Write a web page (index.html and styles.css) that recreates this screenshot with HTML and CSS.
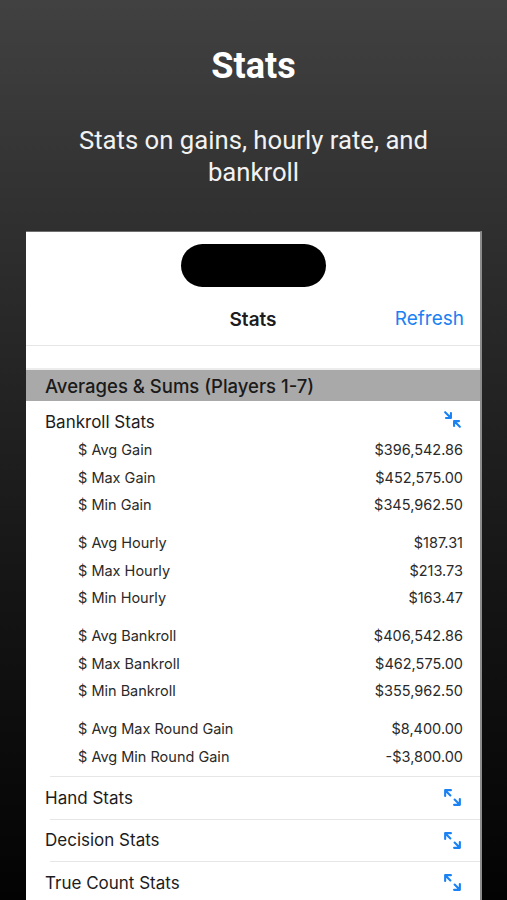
FILE: index.html
```html
<!DOCTYPE html>
<html lang="en">
<head>
    <meta charset="UTF-8">
    <meta name="viewport" content="width=device-width, initial-scale=1.0">
    <title>Stats</title>
    <link rel="stylesheet" href="styles.css">
</head>
<body>

    <!-- Promo header above the phone screen -->
    <header class="promo">
        <h1 class="promo-title">Stats</h1>
        <p class="promo-text">Stats on gains, hourly rate, and bankroll</p>
    </header>

    <div class="phone">
        <div class="island"></div>

        <div class="nav-bar">
            <span class="nav-title">Stats</span>
            <span class="nav-action">Refresh</span>
        </div>

        <div class="section-head">Averages &amp; Sums (Players 1-7)</div>

        <!-- Expanded group -->
        <div class="group">
            <div class="group-head">
                <span>Bankroll Stats</span>
                <svg class="toggle-icon" viewBox="0 0 20 20">
                    <path d="M3 3 L8.5 8.5 M8.5 3.8 V8.5 H3.8 M17 17 L11.5 11.5 M11.5 16.2 V11.5 H16.2"/>
                </svg>
            </div>

            <div class="stat-block">
                <div class="stat-row"><span>$ Avg Gain</span><span>$396,542.86</span></div>
                <div class="stat-row"><span>$ Max Gain</span><span>$452,575.00</span></div>
                <div class="stat-row"><span>$ Min Gain</span><span>$345,962.50</span></div>
            </div>
            <div class="stat-block">
                <div class="stat-row"><span>$ Avg Hourly</span><span>$187.31</span></div>
                <div class="stat-row"><span>$ Max Hourly</span><span>$213.73</span></div>
                <div class="stat-row"><span>$ Min Hourly</span><span>$163.47</span></div>
            </div>
            <div class="stat-block">
                <div class="stat-row"><span>$ Avg Bankroll</span><span>$406,542.86</span></div>
                <div class="stat-row"><span>$ Max Bankroll</span><span>$462,575.00</span></div>
                <div class="stat-row"><span>$ Min Bankroll</span><span>$355,962.50</span></div>
            </div>
            <div class="stat-block">
                <div class="stat-row"><span>$ Avg Max Round Gain</span><span>$8,400.00</span></div>
                <div class="stat-row"><span>$ Avg Min Round Gain</span><span>-$3,800.00</span></div>
            </div>
        </div>

        <!-- Collapsed groups -->
        <div class="group-row">
            <span>Hand Stats</span>
            <svg class="toggle-icon" viewBox="0 0 20 20">
                <path d="M3 3 L8 8 M3 8.5 V3 H8.5 M17 17 L12 12 M17 11.5 V17 H11.5"/>
            </svg>
        </div>
        <div class="group-row">
            <span>Decision Stats</span>
            <svg class="toggle-icon" viewBox="0 0 20 20">
                <path d="M3 3 L8 8 M3 8.5 V3 H8.5 M17 17 L12 12 M17 11.5 V17 H11.5"/>
            </svg>
        </div>
        <div class="group-row">
            <span>True Count Stats</span>
            <svg class="toggle-icon" viewBox="0 0 20 20">
                <path d="M3 3 L8 8 M3 8.5 V3 H8.5 M17 17 L12 12 M17 11.5 V17 H11.5"/>
            </svg>
        </div>
    </div>

</body>
</html>
```

FILE: styles.css
```css
html,
body {
    height: 100%;
}

body {
    margin: 0;
    overflow: hidden;
    background: linear-gradient(to bottom, #414141 0%, #2c2c2c 30%, #151515 65%, #030303 100%);
    font-family: Inter, "Noto Sans", sans-serif;
    color: #1c1c1e;
}

.promo {
    text-align: center;
    color: #ffffff;
    font-family: Roboto, "Noto Sans", sans-serif;
    padding-top: 44px;
    height: 187px;
    box-sizing: border-box;
}

.promo-title {
    margin: 0;
    font-size: 36px;
    line-height: 44px;
    font-weight: 700;
}

.promo-text {
    margin: 36px auto 0;
    width: 390px;
    font-size: 25.7px;
    line-height: 32px;
    font-weight: 400;
    color: #f2f2f2;
}

.phone {
    margin-top: 44px;
    margin-left: 26px;
    width: 456px;
    height: 700px;
    background-color: #ffffff;
    border-top: 1px solid #6e6e6e;
    border-right: 2px solid #8c8c8c;
    box-sizing: border-box;
    overflow: hidden;
}

.island {
    width: 145px;
    height: 43px;
    margin: 12px auto 0;
    border-radius: 22px;
    background-color: #000000;
}

.nav-bar {
    position: relative;
    height: 40px;
    margin-top: 12px;
    margin-bottom: 6px;
    display: flex;
    align-items: center;
    justify-content: center;
}

.nav-title {
    font-size: 19px;
    font-weight: 600;
}

.nav-action {
    position: absolute;
    right: 16px;
    top: 8px;
    font-size: 19px;
    color: #1a82f2;
}

.section-head {
    height: 56px;
    box-sizing: border-box;
    padding-top: 24px;
    border-top: 1px solid #e6e6e6;
    background: linear-gradient(to bottom, #ffffff 0, #ffffff 22px, #ececec 22px, #ececec 24px, #a9a9a9 24px);
    font-size: 18.5px;
    font-weight: 500;
    line-height: 32px;
    text-indent: 19px;
    color: #1a1a1a;
}

.group {
    padding: 0 17px 6px 19px;
}

.group-head {
    display: flex;
    justify-content: space-between;
    align-items: center;
    height: 35px;
    padding-top: 7px;
    box-sizing: border-box;
    font-size: 17px;
}

.group-head .toggle-icon {
    margin-top: -6px;
}

.stat-block {
    padding-left: 33px;
    margin-bottom: 10.5px;
}

.stat-block:last-child {
    margin-bottom: 0;
}

.stat-row {
    display: flex;
    justify-content: space-between;
    height: 27.5px;
    line-height: 27.5px;
    font-size: 14.5px;
    color: #2a2a2a;
}

.group-row {
    display: flex;
    justify-content: space-between;
    align-items: center;
    height: 42.5px;
    box-sizing: border-box;
    margin-left: 24px;
    padding: 0 17px 0 0;
    border-top: 1px solid #e6e6e6;
    font-size: 17px;
}

.group-row span {
    margin-left: -5px;
}

.toggle-icon {
    width: 21px;
    height: 21px;
    fill: none;
    stroke: #1a82f2;
    stroke-width: 2;
    stroke-linecap: round;
    stroke-linejoin: round;
}
```
